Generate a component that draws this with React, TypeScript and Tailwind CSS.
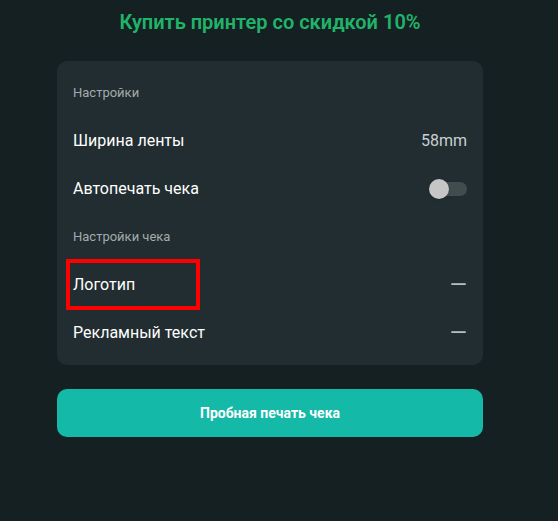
import React, { useState } from 'react';

const SectionTitle: React.FC<{ children: React.ReactNode }> = ({ children }) => (
  <div className="h-12 flex items-center text-[13px] text-[#a3abad]">{children}</div>
);

const Dash = () => <span className="text-[22px] leading-none text-[#b8bfc0]">—</span>;

const Row: React.FC<{ label: string; right: React.ReactNode; marked?: boolean }> = ({ label, right, marked }) => (
  <div className="relative h-12 flex items-center justify-between">
    <span className="text-[16px] text-white">{label}</span>
    {right}
    {marked && (
      <div className="absolute -left-[7px] -top-[2px] w-[134px] h-[51px] border-4 border-[#ff0000]" />
    )}
  </div>
);

const App: React.FC = () => {
  const [autoPrint, setAutoPrint] = useState(false);

  return (
    <div className="min-h-[521px] bg-[#152022] font-['Roboto',sans-serif]">
      <div className="ml-[57px] w-[426px] pt-2">
        <h1 className="h-7 flex items-center justify-center text-[20px] font-semibold text-[#20b46a]">
          Купить принтер со скидкой 10%
        </h1>

        <div className="mt-[25px] bg-[#212d30] rounded-[10px] px-4 py-2">
          <SectionTitle>Настройки</SectionTitle>
          <Row label="Ширина ленты" right={<span className="text-[16px] text-[#c9cfd0]">58mm</span>} />
          <Row
            label="Автопечать чека"
            right={
              <button
                onClick={() => setAutoPrint((v) => !v)}
                className="relative w-[38px] h-5 flex items-center"
              >
                <span className={`absolute left-[3px] right-0 h-[14px] rounded-full ${autoPrint ? 'bg-teal-700' : 'bg-[#3f4d4e]'}`} />
                <span className={`absolute top-0 w-5 h-5 rounded-full bg-[#c6c6c6] shadow ${autoPrint ? 'left-[18px]' : 'left-0'}`} />
              </button>
            }
          />
          <SectionTitle>Настройки чека</SectionTitle>
          <Row label="Логотип" right={<Dash />} marked />
          <Row label="Рекламный текст" right={<Dash />} />
        </div>

        <button className="mt-6 w-full h-12 rounded-[10px] bg-[#14b9a8] text-white text-[14px] font-bold">
          Пробная печать чека
        </button>
      </div>
    </div>
  );
};

export default App;
